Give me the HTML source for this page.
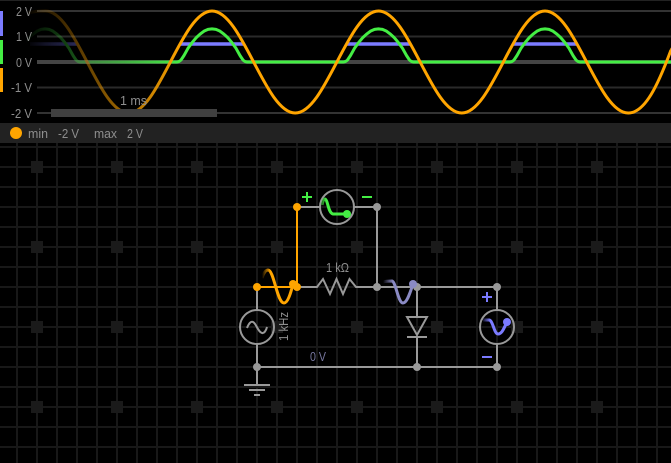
<!DOCTYPE html>
<html><head><meta charset="utf-8">
<style>
html,body{margin:0;padding:0;background:#000;width:671px;height:463px;overflow:hidden}
svg{display:block}
text{font-family:"Liberation Sans",sans-serif;font-size:13px;fill:#8e8e8e}
</style></head>
<body>
<svg width="671" height="463" viewBox="0 0 671 463" xmlns="http://www.w3.org/2000/svg">
<defs>
<linearGradient id="fade" gradientUnits="userSpaceOnUse" x1="25" y1="0" x2="190" y2="0">
<stop offset="0" stop-color="#fff" stop-opacity="0"/>
<stop offset=".12" stop-color="#fff" stop-opacity=".15"/>
<stop offset=".6" stop-color="#fff" stop-opacity=".62"/>
<stop offset=".95" stop-color="#fff" stop-opacity="1"/>
</linearGradient>
<mask id="m" maskUnits="userSpaceOnUse" x="0" y="0" width="671" height="123">
<rect x="0" y="0" width="671" height="123" fill="url(#fade)"/>
</mask>
<linearGradient id="fo" gradientUnits="userSpaceOnUse" x1="262" y1="0" x2="270" y2="0"><stop offset="0" stop-color="#ffa500" stop-opacity="0"/><stop offset="1" stop-color="#ffa500"/></linearGradient>
<linearGradient id="fg" gradientUnits="userSpaceOnUse" x1="320" y1="0" x2="326" y2="0"><stop offset="0" stop-color="#44ee44" stop-opacity=".2"/><stop offset="1" stop-color="#44ee44"/></linearGradient>
<linearGradient id="fb" gradientUnits="userSpaceOnUse" x1="482" y1="0" x2="490" y2="0"><stop offset="0" stop-color="#7b7bff" stop-opacity="0"/><stop offset="1" stop-color="#7b7bff"/></linearGradient>
<linearGradient id="fp" gradientUnits="userSpaceOnUse" x1="383" y1="0" x2="393" y2="0"><stop offset="0" stop-color="#8a8ac4" stop-opacity="0"/><stop offset="1" stop-color="#8a8ac4"/></linearGradient>
<path id="hump" d="M-35 62Q-33 62 -31 60L-28 55.5L-24 48.3L-20 42.7L-16 37.9L-12 34.2L-8 31.15L-4 29.4L0 28.85L4 29.4L8 31.15L12 34.2L16 37.9L20 42.7L24 48.3L28 55.5L31 60Q33 62 35 62" fill="none" stroke="#44ee44" stroke-width="3" stroke-linejoin="round"/>
</defs>

<!-- grid -->
<g stroke="#181818" stroke-width="2" fill="none">
<path d="M17 143V463M37 143V463M57 143V463M77 143V463M97 143V463M117 143V463M137 143V463M157 143V463M177 143V463M197 143V463M217 143V463M237 143V463M257 143V463M277 143V463M297 143V463M317 143V463M337 143V463M357 143V463M377 143V463M397 143V463M417 143V463M437 143V463M457 143V463M477 143V463M497 143V463M517 143V463M537 143V463M557 143V463M577 143V463M597 143V463M617 143V463M637 143V463M657 143V463"/>
<path d="M0 147H671M0 167H671M0 187H671M0 207H671M0 227H671M0 247H671M0 267H671M0 287H671M0 307H671M0 327H671M0 347H671M0 367H671M0 387H671M0 407H671M0 427H671M0 447H671"/>
</g>
<g fill="#1a1a1a">
<rect x="31" y="161" width="12" height="12"/><rect x="111" y="161" width="12" height="12"/><rect x="191" y="161" width="12" height="12"/><rect x="271" y="161" width="12" height="12"/><rect x="351" y="161" width="12" height="12"/><rect x="431" y="161" width="12" height="12"/><rect x="511" y="161" width="12" height="12"/><rect x="591" y="161" width="12" height="12"/>
<rect x="31" y="241" width="12" height="12"/><rect x="111" y="241" width="12" height="12"/><rect x="191" y="241" width="12" height="12"/><rect x="271" y="241" width="12" height="12"/><rect x="351" y="241" width="12" height="12"/><rect x="431" y="241" width="12" height="12"/><rect x="511" y="241" width="12" height="12"/><rect x="591" y="241" width="12" height="12"/>
<rect x="31" y="321" width="12" height="12"/><rect x="111" y="321" width="12" height="12"/><rect x="191" y="321" width="12" height="12"/><rect x="271" y="321" width="12" height="12"/><rect x="351" y="321" width="12" height="12"/><rect x="431" y="321" width="12" height="12"/><rect x="511" y="321" width="12" height="12"/><rect x="591" y="321" width="12" height="12"/>
<rect x="31" y="401" width="12" height="12"/><rect x="111" y="401" width="12" height="12"/><rect x="191" y="401" width="12" height="12"/><rect x="271" y="401" width="12" height="12"/><rect x="351" y="401" width="12" height="12"/><rect x="431" y="401" width="12" height="12"/><rect x="511" y="401" width="12" height="12"/><rect x="591" y="401" width="12" height="12"/>
</g>

<!-- scope background -->
<rect x="0" y="0" width="671" height="123" fill="#000"/>
<rect x="0" y="0" width="671" height="1" fill="#222"/>
<rect x="37" y="10" width="634" height="2" fill="#333"/>
<rect x="37" y="35.5" width="634" height="2" fill="#2a2a2a"/>
<rect x="37" y="60" width="634" height="4" fill="#444"/>
<rect x="37" y="86.5" width="634" height="2" fill="#2a2a2a"/>
<rect x="37" y="112" width="634" height="2" fill="#333"/>
<rect x="0" y="11" width="3" height="25" fill="#7b7bff"/>
<rect x="0" y="40" width="3" height="24" fill="#44ee44"/>
<rect x="0" y="68" width="3" height="24" fill="#ffa500"/>
<text x="16" y="16" textLength="16" lengthAdjust="spacingAndGlyphs">2 V</text>
<text x="16" y="41" textLength="16" lengthAdjust="spacingAndGlyphs">1 V</text>
<text x="16" y="67" textLength="16" lengthAdjust="spacingAndGlyphs">0 V</text>
<text x="11" y="92" textLength="21" lengthAdjust="spacingAndGlyphs">-1 V</text>
<text x="11" y="118" textLength="21" lengthAdjust="spacingAndGlyphs">-2 V</text>

<!-- traces -->
<g mask="url(#m)">
<g fill="none" stroke="#7b7bff" stroke-width="3.5">
<path d="M30 44H77"/><path d="M180 44H244"/><path d="M346.5 44H410.5"/><path d="M513 44H577"/>
</g>
<path d="M80 62H177M247 62H343.5M413.5 62H510M580 62H671" stroke="#44ee44" stroke-width="3" fill="none"/>
<use href="#hump" x="45"/><use href="#hump" x="212"/><use href="#hump" x="378.5"/><use href="#hump" x="545"/>
<path d="M28 13C35 11 40 11 45.5 11C75.8 11 98.5 113 128.75 113C159 113 181.7 11 212 11C242.3 11 265 113 295.25 113C325.5 113 348.2 11 378.5 11C408.8 11 431.5 113 461.75 113C492 113 514.7 11 545 11C575.3 11 598 113 628.25 113C645 113 658 85 671 50" fill="none" stroke="#ffa500" stroke-width="3"/>
<circle cx="674" cy="50" r="4" fill="#ffa500"/>
</g>

<rect x="51" y="109" width="166" height="8" fill="#404040"/>
<text x="120" y="105" textLength="27" lengthAdjust="spacingAndGlyphs">1 ms</text>

<!-- status bar -->
<rect x="0" y="123" width="671" height="20" fill="#222"/>
<circle cx="16" cy="133" r="6" fill="#ffa500"/>
<text x="28" y="138" textLength="20" lengthAdjust="spacingAndGlyphs">min</text>
<text x="58" y="138" textLength="21" lengthAdjust="spacingAndGlyphs">-2 V</text>
<text x="94" y="138" textLength="23" lengthAdjust="spacingAndGlyphs">max</text>
<text x="127" y="138" textLength="16" lengthAdjust="spacingAndGlyphs">2 V</text>

<!-- wires -->
<g stroke="#999" stroke-width="2" fill="none">
<path d="M297 207H320M354 207H377V287"/>
<path d="M297 287H317L323 279L330 294L336.5 279L343 294L349.5 279L356 287H497V310M497 344V367H257V344M257 310V287M257 367V384"/>
<path d="M417 287V317M417 337V367"/>
<path d="M407 317H427L417 335Z"/>
<path d="M407 337H427"/>
<path d="M244 385H270M249 390H265M254 395H260"/>
<circle cx="337" cy="207" r="17"/>
<circle cx="497" cy="327" r="17"/>
<circle cx="257" cy="327" r="17"/>
<path d="M247 328C249 323 251 321 253 322C256 323 258 332 262 333C264 333.5 266 331 267 327"/>
</g>
<g fill="#999">
<circle cx="377" cy="207" r="4"/><circle cx="377" cy="287" r="4"/><circle cx="417" cy="287" r="4"/><circle cx="497" cy="287" r="4"/>
<circle cx="257" cy="367" r="4"/><circle cx="417" cy="367" r="4"/><circle cx="497" cy="367" r="4"/>
</g>
<!-- orange wires -->
<path d="M297 207V287M257 287H297" stroke="#ffa500" stroke-width="2" fill="none"/>
<circle cx="297" cy="207" r="4" fill="#ffa500"/><circle cx="257" cy="287" r="4" fill="#ffa500"/><circle cx="297" cy="287" r="4" fill="#ffa500"/>

<!-- probes -->
<path d="M262 278C264 272 266 270 268 270C274 270 277 303 284 303C288 303 291 292 293 284" fill="none" stroke="url(#fo)" stroke-width="3"/>
<circle cx="293" cy="284" r="4" fill="#ffa500"/>
<path d="M322 205C323 200 324 199 325 199C328 200 328 213 333 214H347" fill="none" stroke="url(#fg)" stroke-width="3"/>
<circle cx="347" cy="214" r="4" fill="#44ee44"/>
<path d="M483 320H489C493 320 494 334 498 334C502 334 504 328 507 322" fill="none" stroke="url(#fb)" stroke-width="3"/>
<circle cx="507" cy="322" r="4" fill="#7b7bff"/>
<path d="M383 282C386 281 389 281 392 281C396 282 398 303 403 303C407 303 410 293 413 284" fill="none" stroke="url(#fp)" stroke-width="3"/>
<circle cx="413" cy="284" r="4" fill="#8a8ac4"/>

<!-- signs -->
<path d="M302 197H312M307 192V202M362 197H372" stroke="#44ee44" stroke-width="2" fill="none"/>
<path d="M482 297H492M487 292V302M482 357H492" stroke="#7b7bff" stroke-width="2" fill="none"/>

<!-- labels -->
<text x="326" y="272" textLength="23" lengthAdjust="spacingAndGlyphs">1 kΩ</text>
<text x="310" y="361" textLength="16" lengthAdjust="spacingAndGlyphs" style="fill:#77779f">0 V</text>
<text transform="translate(288,341) rotate(-90)" x="0" y="0" textLength="29" lengthAdjust="spacingAndGlyphs">1 kHz</text>
</svg>
</body></html>
